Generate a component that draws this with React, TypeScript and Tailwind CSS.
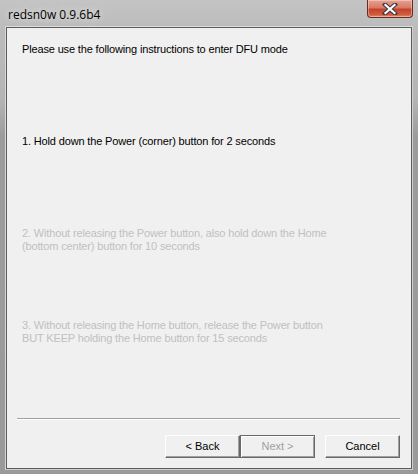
import React from "react";

const uiFont = { fontFamily: '"Liberation Sans", Arial, sans-serif' };

function CloseButton() {
  return (
    <div className="mr-[5px] flex h-[18px] w-[46px] items-center justify-center rounded-b-[4px] border border-t-0 border-[#6b2a20] bg-[linear-gradient(to_bottom,#e8a08f_0%,#d77a66_45%,#c3432a_55%,#cf5a3f_85%,#e08a70_100%)] shadow-[inset_0_0_0_1px_rgba(255,255,255,0.35)]">
      <svg width="16" height="12" viewBox="0 0 16 12">
        <path d="M3 1.5 L13 10.5 M13 1.5 L3 10.5" stroke="#3a3a44" strokeWidth="4.2" strokeLinecap="square" />
        <path d="M3.5 2 L12.5 10 M12.5 2 L3.5 10" stroke="#ffffff" strokeWidth="2.2" strokeLinecap="square" />
      </svg>
    </div>
  );
}

function WizButton({ label, disabled, isDefault }: { label: string; disabled?: boolean; isDefault?: boolean }) {
  return (
    <div
      className={
        isDefault
          ? "flex h-[23px] w-[75px] shrink-0 items-center justify-center border border-[#696969] bg-[#f0f0f0] shadow-[inset_1px_1px_0_#ffffff,inset_-1px_-1px_0_#a0a0a0]"
          : "flex h-[23px] w-[75px] shrink-0 items-center justify-center border border-t-white border-l-white border-r-[#696969] border-b-[#696969] bg-[#f0f0f0] shadow-[inset_-1px_-1px_0_#a0a0a0]"
      }
    >
      <span className={disabled ? "text-[11px] text-[#a0a0a0]" : "text-[11px] text-black"}>{label}</span>
    </div>
  );
}

export default function App() {
  return (
    <div
      className="flex h-[474px] w-[418px] flex-col overflow-hidden bg-[linear-gradient(to_bottom,#c4c4c4_0px,#bcbcbc_26px,#b4b4b4_100px,#9c9c9c_136px,#9a9a9a_100%)]"
      style={uiFont}
    >
      <div className="flex h-[26px] items-start justify-between">
        <span
          className="mt-[6px] pl-[8px] text-[12px] text-black [text-shadow:0_0_6px_#f4f4f4]"
          style={{ fontFamily: '"Open Sans", "Liberation Sans", sans-serif' }}
        >
          redsn0w 0.9.6b4
        </span>
        <CloseButton />
      </div>

      <div className="mx-[5px] mb-[4px] flex flex-1 border-t border-l border-r border-b border-t-[#dedede] border-l-[#d8d8d8] border-r-[#cfcfcf] border-b-[#cfcfcf]">
        <div className="flex flex-1 flex-col border border-[#5c5c5c] bg-[#f0f0f0] pl-[15px] pr-[10px] text-[11px] leading-[13px] tracking-[-0.15px]">
          <p className="mt-[15px] text-black">Please use the following instructions to enter DFU mode</p>
          <p className="mt-[79px] text-black">1. Hold down the Power (corner) button for 2 seconds</p>
          <p className="mt-[79px] text-[#c0c0c0]">
            2. Without releasing the Power button, also hold down the Home
            <br />
            (bottom center) button for 10 seconds
          </p>
          <p className="mt-[66px] text-[#c0c0c0]">
            3. Without releasing the Home button, release the Power button
            <br />
            BUT KEEP holding the Home button for 15 seconds
          </p>

          <div className="mt-auto mb-[10px] mr-[1px] ml-[-5px] tracking-normal">
            <div className="border-t border-b border-t-[#a0a0a0] border-b-white" />
            <div className="mt-[15px] flex justify-end">
              <WizButton label="< Back" />
              <WizButton label="Next >" disabled isDefault />
              <div className="w-[10px]" />
              <WizButton label="Cancel" />
            </div>
          </div>
        </div>
      </div>
    </div>
  );
}
